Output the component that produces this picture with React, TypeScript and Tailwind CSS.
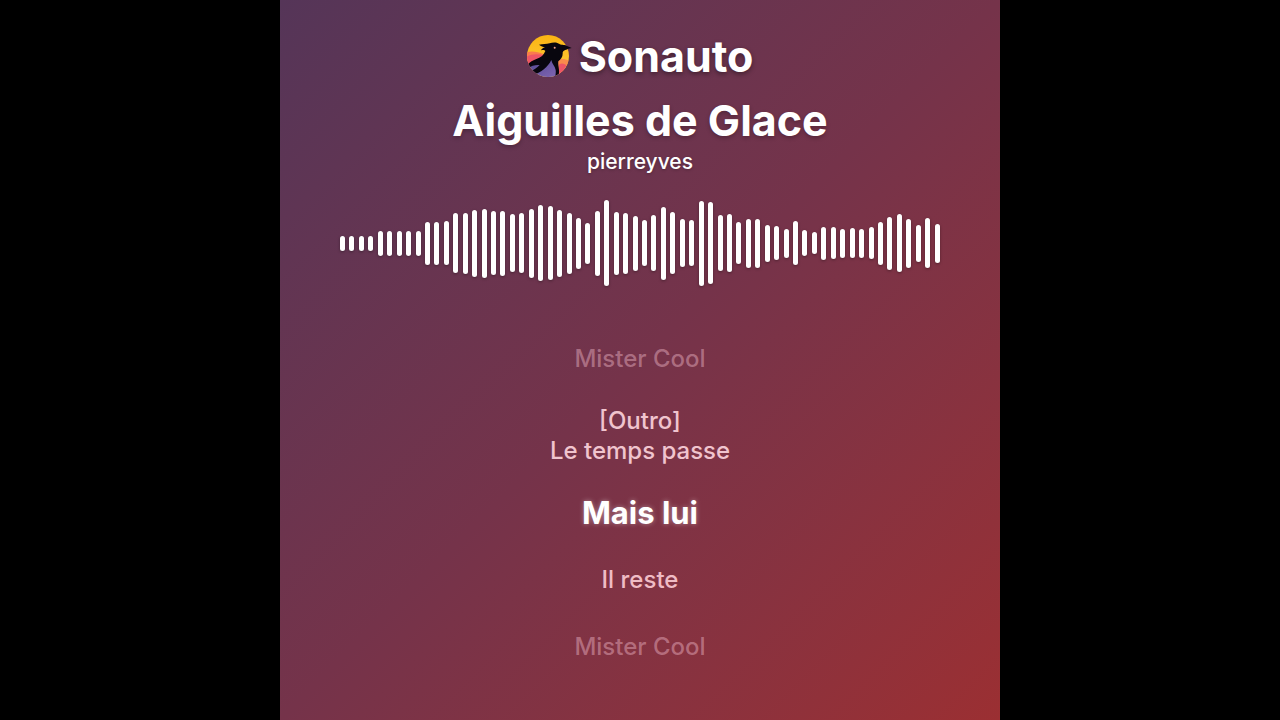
import React from 'react';

interface LyricLine {
  text: string;
  className: string;
}

// Bar heights in pixels, left to right
const levels = [
  15, 15, 15, 15, 25, 25, 25, 25, 25, 43, 43, 44, 60, 61, 67, 69,
  64, 65, 58, 60, 69, 76, 74, 67, 61, 51, 41, 65, 86, 63, 61, 55,
  46, 56, 73, 62, 48, 46, 85, 82, 56, 58, 42, 49, 49, 37, 34, 29,
  44, 26, 22, 33, 32, 29, 30, 29, 32, 43, 53, 58, 49, 37, 50, 39,
];

const lyrics: LyricLine[] = [
  { text: 'Mister Cool', className: 'text-2xl leading-[30px] font-medium text-[#f0b8c8]/45' },
  { text: '[Outro]\nLe temps passe', className: 'text-2xl leading-[30px] font-medium text-[#f0c4ce]' },
  {
    text: 'Mais lui',
    className: 'text-[31px] leading-[30px] font-bold text-white [text-shadow:0_0_5px_rgba(255,255,255,0.4)]',
  },
  { text: 'Il reste', className: 'text-2xl leading-10 font-medium text-[#efbcc5]' },
  { text: 'Mister Cool', className: 'text-2xl leading-[30px] font-medium text-[#f0b8c8]/45' },
];

const Logo: React.FC = () => (
  <svg viewBox="12 9 132 126" className="h-[42px] w-11 shrink-0 overflow-visible" aria-hidden="true">
    <defs>
      <linearGradient id="sky" x1="0" y1="0" x2="0" y2="1">
        <stop offset="0" stopColor="#fbb20f" />
        <stop offset="1" stopColor="#fdd043" />
      </linearGradient>
      <linearGradient id="wing" x1="0" y1="0" x2="1" y2="1">
        <stop offset="0" stopColor="#4f4590" />
        <stop offset="1" stopColor="#8468b4" />
      </linearGradient>
      <clipPath id="disc">
        <circle cx="75" cy="72" r="63" />
      </clipPath>
    </defs>
    <g clipPath="url(#disc)">
      <rect width="156" height="144" fill="url(#sky)" />
      <path d="M8 62C22 56 42 58 62 66L60 100H8Z" fill="#fb7a4e" />
      <path d="M8 76C22 66 42 64 60 70L50 100H8Z" fill="#ee5566" />
      <path d="M104 86C114 78 128 80 142 88V140H96Z" fill="#fb8a4c" />
      <path d="M108 98C116 92 122 94 130 100L112 140H100Z" fill="#ee5566" />
      <path d="M8 98C30 90 60 82 96 82L108 140H8Z" fill="url(#wing)" />
      <path
        d="M146 48C138 45 134 42 126 40C118 38 114 39 108 35C100 30 88 31 80 34C70 37 60 36 48 38C54 43 60 44 66 46C60 48 56 51 54 55C60 53 65 54 67 57C62 70 54 76 42 80C28 85 18 92 8 102L12 110C26 100 38 98 50 99C42 108 32 114 22 118L32 128C54 122 74 106 85 84C87 96 96 102 98 114C99 122 98 128 95 138L106 134C112 116 104 102 106 88C114 82 120 74 119 62C120 54 134 52 146 48Z"
        fill="#08060e"
      />
    </g>
    <path d="M118 38C126 40 138 43 146 48C138 50 128 52 120 54Z" fill="#08060e" />
    <circle cx="95" cy="47" r="3" fill="#f2a08a" />
  </svg>
);

const Waveform: React.FC = () => (
  <div className="mt-6 flex h-[86px] w-full max-w-[600px] items-center justify-between" role="img" aria-label="Waveform">
    {levels.map((level, i) => (
      <span
        key={i}
        className="w-[5px] rounded-full bg-white shadow-[0_1px_3px_rgba(0,0,0,0.35)]"
        style={{ height: level }}
      />
    ))}
  </div>
);

const App: React.FC = () => (
  <div className="min-h-screen bg-black font-['Inter',sans-serif]">
    <main className="mx-auto flex min-h-screen w-full max-w-[720px] flex-col items-center bg-linear-135 from-[#553558] via-[#75334a] to-[#9b2f32] text-center text-white">
      <header className="flex flex-col items-center pt-[27px]">
        <div className="flex items-center gap-2 py-2 [text-shadow:0_2px_5px_rgba(0,0,0,0.4)]">
          <Logo />
          <span className="text-[43px] leading-10 font-bold">Sonauto</span>
        </div>
        <h1 className="mt-[7px] text-[43px] leading-[56px] font-bold [text-shadow:0_2px_4px_rgba(0,0,0,0.25)]">
          Aiguilles de Glace
        </h1>
        <p className="text-[21px] leading-7 font-medium [text-shadow:0_1px_3px_rgba(0,0,0,0.25)]">pierreyves</p>
      </header>

      <Waveform />

      <div className="mt-[58px] flex flex-col items-center gap-8">
        {lyrics.map((line, i) => (
          <p key={i} className={`whitespace-pre-line ${line.className}`}>
            {line.text}
          </p>
        ))}
      </div>
    </main>
  </div>
);

export default App;
